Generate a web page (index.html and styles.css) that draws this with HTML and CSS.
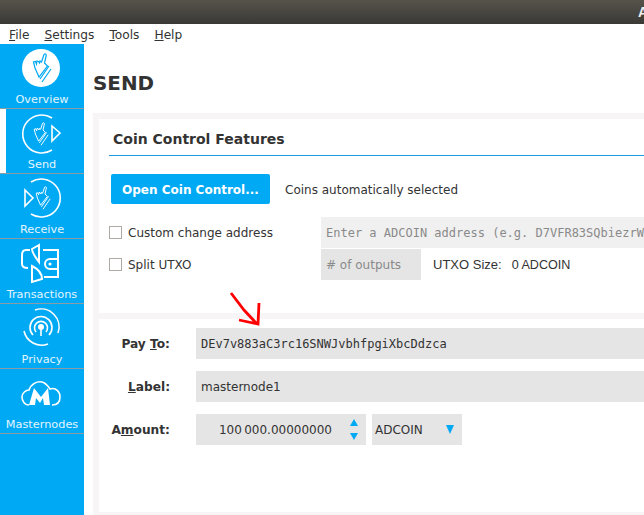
FILE: index.html
```html
<!DOCTYPE html>
<html lang="en">
<head>
  <meta charset="UTF-8" />
  <title>ADCOIN - Send</title>
  <link rel="stylesheet" href="styles.css">
</head>
<body>

<svg class="defs" width="0" height="0">
  <symbol id="hand" viewBox="0 0 20 30">
    <path d="M12 1.5C13 .5 14.5 1 14.2 2.5L12.5 10 15.5 13 7 24 3 15 1.5 9 3.5 8.5 4.5 11 5 8 6.5 8.5 7.5 10 8 8 9.5 9Z" />
    <path d="M17 13 8 26M19 16 10 29" />
  </symbol>
</svg>

<div id="title-bar"><span class="title-text">A</span></div>

<div id="menu-bar">
  <span><u>F</u>ile</span>
  <span><u>S</u>ettings</span>
  <span><u>T</u>ools</span>
  <span><u>H</u>elp</span>
</div>

<div id="app">
  <nav id="sidebar">
    <div class="nav-item">
      <svg class="nav-icon" viewBox="20 45 44 44">
        <circle class="disc" cx="41" cy="68" r="19" />
        <use class="hand-blue" href="#hand" x="32" y="53" width="20" height="30" />
      </svg>
      <span>Overview</span>
    </div>
    <div class="nav-item active">
      <svg class="nav-icon" viewBox="20 111 44 44">
        <path class="line" d="M52 118A19 19 0 1 0 52 150" />
        <path class="line" d="M52 126 60 133 52 141Z" />
        <use class="line thin" href="#hand" x="33" y="122" width="16" height="24" />
      </svg>
      <span>Send</span>
    </div>
    <div class="nav-item">
      <svg class="nav-icon" viewBox="20 176 44 44">
        <path class="line" d="M31 182A19 19 0 1 1 31 214" />
        <path class="line" d="M25 190 33 198 25 206Z" />
        <use class="line thin" href="#hand" x="35" y="186" width="16" height="24" />
      </svg>
      <span>Receive</span>
    </div>
    <div class="nav-item">
      <svg class="nav-icon" viewBox="20 241 44 44">
        <path class="line thick" d="M39 245 32 249C32 253 36 258 39 262ZM32 282V266C36 268 42 272 42 279Z" />
        <path class="line thick" d="M30 250H26C23 250 22 252 22 255V264C22 267 24 268 28 268" />
        <path class="line thick" d="M43 250H58V277H44M58 259H50A4.5 4.5 0 0 0 50 269H58" />
        <circle class="fill" cx="50" cy="264" r="1.6" />
      </svg>
      <span>Transactions</span>
    </div>
    <div class="nav-item">
      <svg class="nav-icon" viewBox="20 306 44 44">
        <circle class="fill" cx="41" cy="327" r="3" />
        <path class="line" d="M41 328V336" />
        <path class="line" d="M36 332A6.5 6.5 0 1 1 46 332M33 335A11 11 0 1 1 49 335" />
        <path class="line" d="M35 310A18 18 0 0 1 58 333M48 344A18 18 0 0 1 24 331" />
      </svg>
      <span>Privacy</span>
    </div>
    <div class="nav-item">
      <svg class="nav-icon" viewBox="20 371 44 44">
        <path class="line" d="M29 405C24 405 22 400 22 397 22 393 26 390 29 390 31 384 37 381 42 382 46 383 48 386 50 389 56 387 60 392 60 397 60 402 57 405 52 405" />
        <path class="fill" d="M29 405 34 388 41 397 48 388 50 405H44L43 398 40 403 36 398 35 405Z" />
      </svg>
      <span>Masternodes</span>
    </div>
  </nav>

  <main id="content">
    <h1>SEND</h1>
    <div class="panel">
      <section class="card coin-control">
        <h2>Coin Control Features</h2>
        <div class="button-row">
          <button class="primary">Open Coin Control...</button>
          <span class="plain">Coins automatically selected</span>
        </div>
        <div class="option-row">
          <label class="check"><i></i>Custom change address</label>
          <input class="field light mono" type="text" placeholder="Enter a ADCOIN address (e.g. D7VFR83SQbiezrW1wFjUoZ1L9Z)" />
        </div>
        <div class="option-row">
          <label class="check"><i></i>Split UTXO</label>
          <input class="field short" type="text" placeholder="# of outputs" />
          <span class="utxo">UTXO Size:</span>
          <span class="utxo">0 ADCOIN</span>
        </div>
      </section>

      <section class="card pay-form">
        <label class="form-label">Pay <u>T</u>o:</label>
        <input class="field mono" type="text" value="DEv7v883aC3rc16SNWJvbhfpgiXbcDdzca" />
        <label class="form-label"><u>L</u>abel:</label>
        <input class="field" type="text" value="masternode1" />
        <label class="form-label">A<u>m</u>ount:</label>
        <div class="amount-row">
          <div class="amount">
            <span>100&#8201;000.00000000</span>
            <div class="spin"><b class="up"></b><b class="down"></b></div>
          </div>
          <div class="unit">ADCOIN<b class="down large"></b></div>
        </div>
      </section>
    </div>
  </main>
</div>

<svg id="red-arrow" width="36" height="40" viewBox="228 290 36 40">
  <path d="M231 293 244 310 257 324M259 303 258 324 239 320" />
</svg>

</body>
</html>
```

FILE: styles.css
```css
* {
  box-sizing: border-box;
}

html, body {
  height: 100%;
}

body {
  margin: 0;
  overflow: hidden;
  background: #fff;
  color: #333;
  font-family: "DejaVu Sans", sans-serif;
  font-size: 12px;
  position: relative;
}

.defs {
  position: absolute;
}

#title-bar {
  height: 24px;
  background: linear-gradient(#56534a, #3a3936);
  display: flex;
  justify-content: flex-end;
  align-items: center;
  overflow: hidden;
}

.title-text {
  color: #eee;
  font-family: "Liberation Sans", sans-serif;
  font-weight: bold;
  font-size: 14px;
  margin-right: -4px;
}

#menu-bar {
  height: 20px;
  display: flex;
  align-items: center;
  gap: 15px;
  padding: 2px 0 0 9px;
  font-size: 12.2px;
}

#app {
  display: flex;
  height: 471px;
}

#sidebar {
  width: 84px;
  flex: none;
  background: #00a9f4;
  color: #e3f5ff;
  font-size: 11.3px;
}

.nav-item {
  height: 65px;
  display: flex;
  flex-direction: column;
  align-items: center;
  padding-top: 2px;
  border-bottom: 1px solid #8b9ca5;
  white-space: nowrap;
}

.nav-item:first-child {
  padding-top: 1px;
}

.nav-item:first-child span {
  margin-top: 4px;
}

.nav-item span {
  line-height: 14px;
  margin-top: 3px;
}

.nav-item.active {
  box-shadow: inset 6px 0 0 #fff;
}

.nav-icon {
  width: 44px;
  height: 44px;
  display: block;
  flex: none;
}

.disc {
  fill: #fff;
}

.line, .hand-blue {
  fill: none;
  stroke: #fff;
  stroke-width: 1.6;
}

.line.thin {
  stroke-width: 1.2;
}

.line.thick {
  stroke-width: 2;
}

.hand-blue {
  stroke: #00a9f4;
  stroke-width: 1.2;
}

.fill {
  fill: #fff;
}

#content {
  flex: 1;
  min-width: 0;
  padding-left: 9px;
  overflow: hidden;
}

h1 {
  margin: 0;
  height: 69px;
  line-height: 79px;
  font-size: 19.9px;
  color: #333;
}

.panel {
  background: #f7f5f5;
  padding: 6px 0 0 6px;
  display: flex;
  flex-direction: column;
  gap: 6px;
  height: 402px;
}

.card {
  background: #fff;
  height: 194px;
  flex: none;
}

.coin-control {
  padding-left: 10px;
}

h2 {
  margin: 0;
  height: 37px;
  line-height: 40px;
  padding-left: 4px;
  font-size: 14px;
  border-bottom: 1px solid #1e9ee0;
}

.button-row {
  display: flex;
  align-items: center;
  margin: 18px 0 13px 2px;
  gap: 15px;
}

.plain {
  padding-top: 2px;
}

.primary {
  width: 159px;
  height: 30px;
  border: none;
  border-radius: 2px;
  background: #00a9f4;
  color: #fff;
  font-family: inherit;
  font-size: 12px;
  font-weight: bold;
  padding: 2px 0 0;
}

.option-row {
  display: flex;
  align-items: center;
  height: 31px;
  margin-bottom: 1px;
}

.check {
  width: 212px;
  display: flex;
  align-items: center;
  gap: 6px;
  flex: none;
}

.check i {
  width: 13px;
  height: 13px;
  border: 1px solid #b0aaa5;
  display: block;
}

.field {
  border: none;
  outline: none;
  height: 31px;
  width: 520px;
  flex: none;
  background: #e5e5e5;
  color: #333;
  padding: 0 5px;
  font-family: "DejaVu Sans", sans-serif;
  font-size: 12px;
}

.field::placeholder {
  color: #8a8a8a;
  opacity: 1;
}

.field.light {
  background: #f0f0f0;
}

.field.short {
  width: 100px;
}

.mono {
  font-family: "DejaVu Sans Mono", monospace;
  font-size: 12px;
}

.utxo {
  font-family: "Liberation Sans", sans-serif;
  font-size: 13px;
  margin-left: 12px;
}

.utxo + .utxo {
  margin-left: 10px;
  font-size: 12.6px;
}

.pay-form {
  display: grid;
  grid-template-columns: 71px 520px;
  column-gap: 26px;
  row-gap: 12px;
  align-content: start;
  align-items: center;
  padding-top: 9px;
  height: 193px;
}

.form-label {
  font-weight: bold;
  text-align: right;
  white-space: nowrap;
  font-size: 12.2px;
}

.amount-row {
  display: flex;
  gap: 6px;
}

.amount, .unit {
  height: 31px;
  background: #e5e5e5;
  display: flex;
  align-items: center;
}

.amount {
  width: 170px;
  justify-content: flex-end;
}

.spin {
  width: 24px;
  margin-left: 10px;
  display: flex;
  flex-direction: column;
  align-items: center;
  gap: 7px;
}

.up, .down {
  display: block;
  width: 0;
  height: 0;
  border-left: 4.5px solid transparent;
  border-right: 4.5px solid transparent;
}

.up {
  border-bottom: 7px solid #00a9f4;
}

.down {
  border-top: 7px solid #00a9f4;
}

.unit {
  width: 90px;
  padding-left: 3px;
  justify-content: space-between;
  padding-right: 8px;
}

.down.large {
  border-top-width: 9px;
}

#red-arrow {
  position: absolute;
  left: 228px;
  top: 290px;
}

#red-arrow path {
  fill: none;
  stroke: #f00;
  stroke-width: 2.8;
}
```
